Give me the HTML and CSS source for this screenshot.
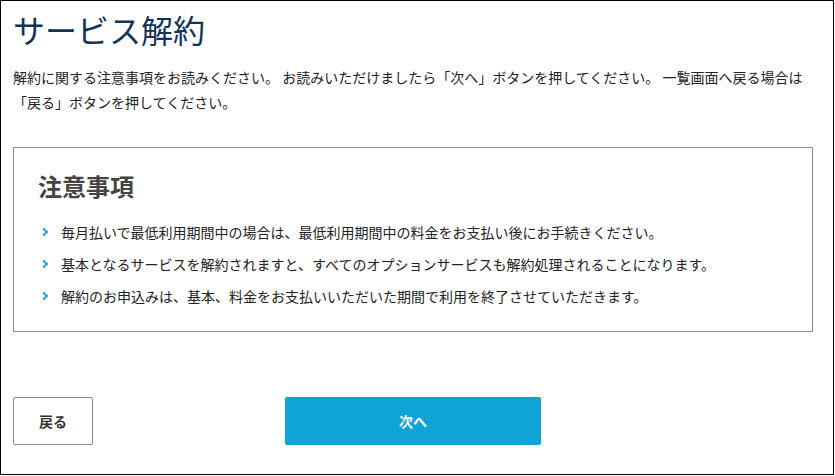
FILE: index.html
```html
<!DOCTYPE html>
<html lang="ja">
<head>
<meta charset="utf-8">
<title>サービス解約</title>
<link rel="stylesheet" href="styles.css">
</head>
<body>
<div class="frame">
  <h1 class="title">サービス解約</h1>
  <p class="lead">解約に関する注意事項をお読みください。 お読みいただけましたら「次へ」ボタンを押してください。 一覧画面へ戻る場合は<br>「戻る」ボタンを押してください。</p>
  <section class="notice">
    <h2 class="notice-title">注意事項</h2>
    <ul class="notice-list">
      <li class="notice-item"><svg class="chev" width="7" height="10" viewBox="0 0 7 10"><polyline points="1.2,1.5 5,5 1.2,8.5" fill="none" stroke="#1a9fd6" stroke-width="2"/></svg><span>毎月払いで最低利用期間中の場合は、最低利用期間中の料金をお支払い後にお手続きください。</span></li>
      <li class="notice-item"><svg class="chev" width="7" height="10" viewBox="0 0 7 10"><polyline points="1.2,1.5 5,5 1.2,8.5" fill="none" stroke="#1a9fd6" stroke-width="2"/></svg><span>基本となるサービスを解約されますと、すべてのオプションサービスも解約処理されることになります。</span></li>
      <li class="notice-item"><svg class="chev" width="7" height="10" viewBox="0 0 7 10"><polyline points="1.2,1.5 5,5 1.2,8.5" fill="none" stroke="#1a9fd6" stroke-width="2"/></svg><span>解約のお申込みは、基本、料金をお支払いいただいた期間で利用を終了させていただきます。</span></li>
    </ul>
  </section>
  <div class="actions">
    <button class="btn btn-back" type="button">戻る</button>
    <button class="btn btn-next" type="button">次へ</button>
  </div>
</div>
</body>
</html>
```

FILE: styles.css
```css
html, body {
  margin: 0;
  padding: 0;
  background: #fff;
}
body {
  font-family: "Noto Sans CJK JP", "Noto Sans", sans-serif;
  color: #222;
}
.frame {
  box-sizing: border-box;
  width: 834px;
  height: 475px;
  border: 1px solid #000;
  padding: 0 12px;
}
.title {
  margin: 8px 0 0;
  font-size: 32px;
  line-height: 40px;
  font-weight: 400;
  color: #12335a;
}
.lead {
  margin: 16px 0 0;
  font-size: 14px;
  line-height: 25px;
  color: #222;
  white-space: nowrap;
}
.notice {
  box-sizing: border-box;
  width: 800px;
  margin-top: 32px;
  border: 1px solid #8a8a8a;
  padding: 23px 24px 24px;
}
.notice-title {
  margin: 0;
  font-size: 24px;
  line-height: 30px;
  font-weight: 700;
  color: #444;
}
.notice-list {
  list-style: none;
  margin: 20px 0 0;
  padding: 0;
}
.notice-item {
  display: flex;
  align-items: center;
  gap: 12px;
  font-size: 14px;
  line-height: 22px;
  color: #222;
  margin-top: 10px;
}
.notice-item:first-child {
  margin-top: 0;
}
.chev {
  margin-left: 4px;
  flex: none;
}
.actions {
  display: flex;
  gap: 192px;
  margin-top: 65px;
}
.btn {
  box-sizing: border-box;
  height: 48px;
  font-family: inherit;
  font-size: 14px;
  font-weight: 700;
  border-radius: 2px;
  cursor: pointer;
}
.btn-back {
  width: 80px;
  background: #fff;
  border: 1px solid #8a8a8a;
  color: #333;
}
.btn-next {
  width: 256px;
  background: #0fa4d6;
  border: none;
  color: #fff;
}
```
